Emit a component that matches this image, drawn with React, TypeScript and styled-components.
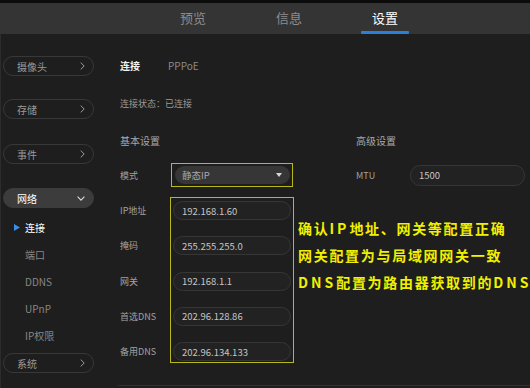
import React from "react";
import styled, { createGlobalStyle } from "styled-components";

const GlobalStyle = createGlobalStyle`
  html, body { margin: 0; padding: 0; background: #1e1e1e; }
  body {
    font-family: "Noto Sans CJK SC", "Noto Sans", "Liberation Sans", sans-serif;
    -webkit-font-smoothing: antialiased;
  }
  * { box-sizing: border-box; }
`;

const Page = styled.div`
  width: 530px;
  height: 388px;
  display: flex;
  flex-direction: column;
  overflow: hidden;
  background: #1e1e1e;
`;

const TopStrip = styled.div`
  flex: none;
  height: 3px;
  background: #0c0c0c;
`;

const Header = styled.nav`
  flex: none;
  height: 31px;
  display: flex;
  padding-left: 145px;
  background: #343434;
`;

const Tab = styled.div<{ $active?: boolean }>`
  position: relative;
  width: 96px;
  display: flex;
  align-items: center;
  justify-content: center;
  padding-bottom: 2px;
  font-size: 13px;
  color: ${(p) => (p.$active ? "#ffffff" : "#8c8c8c")};
  &::after {
    content: "";
    display: ${(p) => (p.$active ? "block" : "none")};
    position: absolute;
    left: 24px;
    bottom: 0;
    width: 48px;
    height: 3px;
    border-radius: 1px;
    background: #2b7fd6;
  }
`;

const Body = styled.div`
  flex: 1;
  display: flex;
  border-left: 1px solid #2c2c2c;
`;

const Sidebar = styled.aside`
  flex: none;
  width: 99px;
  display: flex;
  flex-direction: column;
  padding: 22px 0 0 2px;
`;

const NavPill = styled.div<{ $open?: boolean; $space: number }>`
  width: 91px;
  height: 20px;
  margin-top: ${(p) => p.$space}px;
  display: flex;
  align-items: center;
  justify-content: space-between;
  padding: 0 8px 0 13px;
  border-radius: 10px;
  border: 1px solid ${(p) => (p.$open ? "#3c3c3c" : "#383838")};
  background: ${(p) => (p.$open ? "#3c3c3c" : "transparent")};
  font-size: 10px;
  color: ${(p) => (p.$open ? "#ffffff" : "#9a9a9a")};
`;

const SubList = styled.div`
  display: flex;
  flex-direction: column;
  margin-top: 6px;
`;

const SubItem = styled.div<{ $active?: boolean }>`
  height: 27px;
  display: flex;
  align-items: center;
  padding-left: 11px;
  font-size: 10px;
  color: ${(p) => (p.$active ? "#ffffff" : "#878787")};
`;

const Marker = styled.span`
  width: 11px;
  display: flex;
  align-items: center;
`;

const Main = styled.main`
  flex: 1;
  display: flex;
  flex-direction: column;
  padding: 24px 0 0 20px;
`;

const TitleRow = styled.div`
  height: 14px;
  display: flex;
  align-items: center;
`;

const Title = styled.span`
  width: 48px;
  font-size: 10px;
  font-weight: 700;
  color: #f2f2f2;
`;

const SubTitle = styled.span`
  font-size: 10px;
  color: #8a8a8a;
`;

const Status = styled.div`
  margin-top: 25px;
  height: 14px;
  line-height: 14px;
  font-size: 9px;
  color: #9a9a9a;
`;

const SettingsGrid = styled.div`
  margin-top: 23px;
  display: grid;
  grid-template-columns: 236px 1fr;
  grid-template-rows: 14px 24px;
  row-gap: 15px;
`;

const SectionHeading = styled.div`
  line-height: 14px;
  font-size: 10px;
  color: #a8a8a8;
`;

const FieldRow = styled.div`
  display: flex;
  align-items: center;
`;

const Label = styled.span<{ $width: number }>`
  flex: none;
  width: ${(p) => p.$width}px;
  font-size: 9px;
  color: #a2a2a2;
`;

const SelectBox = styled.div`
  border: 1px solid #b8b81e;
  padding: 2px 2px 2px 3px;
`;

const Select = styled.div`
  width: 115px;
  height: 18px;
  display: flex;
  align-items: center;
  justify-content: space-between;
  padding: 0 8px 0 7px;
  border-radius: 9px;
  background: #363636;
  font-size: 9.5px;
  color: #a8a8a8;
`;

const TextInput = styled.input<{ $width: number; $height: number }>`
  width: ${(p) => p.$width}px;
  height: ${(p) => p.$height}px;
  padding: 0 0 0 8px;
  margin: 0;
  border: 1px solid #363636;
  border-radius: 10px;
  background: #222222;
  font-family: inherit;
  font-size: 9.5px;
  color: #c6c6c6;
  outline: none;
`;

const FieldsRow = styled.div`
  margin-top: 10px;
  display: flex;
  align-items: flex-start;
`;

const LabelStack = styled.div`
  flex: none;
  width: 50px;
  display: flex;
  flex-direction: column;
  gap: 16.25px;
  padding-top: 4px;
`;

const StackLabel = styled.span`
  height: 19px;
  line-height: 19px;
  font-size: 9px;
  color: #a2a2a2;
`;

const FieldBox = styled.div`
  flex: none;
  width: 124px;
  display: flex;
  flex-direction: column;
  gap: 16.25px;
  padding: 3px 1px 1px 2px;
  border: 1px solid #b8b81e;
`;

const Note = styled.div`
  margin-left: 4px;
  padding-top: 18px;
  display: flex;
  flex-direction: column;
  white-space: nowrap;
  font-size: 14px;
  font-weight: 700;
  line-height: 27px;
  letter-spacing: 1.7px;
  color: #f0f000;
`;

const Latin = styled.span`
  letter-spacing: 3px;
`;

const Divider = styled.div`
  margin: 22px 0 0 -2px;
  height: 1px;
  background: #313131;
`;

const ChevronRight = () => (
  <svg width="5" height="8" viewBox="0 0 5 8">
    <polyline points="0.7,0.6 4.2,4 0.7,7.4" fill="none" stroke="#9a9a9a" strokeWidth="1" />
  </svg>
);

const ChevronDown = () => (
  <svg width="8" height="5" viewBox="0 0 8 5">
    <polyline points="0.6,0.7 4,4.2 7.4,0.7" fill="none" stroke="#dcdcdc" strokeWidth="1.1" />
  </svg>
);

const Caret = () => (
  <svg width="6" height="4" viewBox="0 0 6 4">
    <polygon points="0,0 6,0 3,4" fill="#d8d8d8" />
  </svg>
);

const BlueArrow = () => (
  <svg width="6" height="7" viewBox="0 0 6 7">
    <polygon points="0,0 6,3.5 0,7" fill="#3a8ee6" />
  </svg>
);

const fields = [
  { label: "IP地址", value: "192.168.1.60" },
  { label: "掩码", value: "255.255.255.0" },
  { label: "网关", value: "192.168.1.1" },
  { label: "首选DNS", value: "202.96.128.86" },
  { label: "备用DNS", value: "202.96.134.133" },
];

const subItems = ["连接", "端口", "DDNS", "UPnP", "IP权限"];

export default function App() {
  return (
    <>
      <GlobalStyle />
      <Page>
        <TopStrip />
        <Header>
          <Tab>预览</Tab>
          <Tab>信息</Tab>
          <Tab $active>设置</Tab>
        </Header>
        <Body>
          <Sidebar>
            <NavPill $space={0}>
              摄像头
              <ChevronRight />
            </NavPill>
            <NavPill $space={23}>
              存储
              <ChevronRight />
            </NavPill>
            <NavPill $space={25}>
              事件
              <ChevronRight />
            </NavPill>
            <NavPill $space={24} $open>
              网络
              <ChevronDown />
            </NavPill>
            <SubList>
              {subItems.map((s, i) => (
                <SubItem key={s} $active={i === 0}>
                  <Marker>{i === 0 ? <BlueArrow /> : null}</Marker>
                  {s}
                </SubItem>
              ))}
            </SubList>
            <NavPill $space={4}>
              系统
              <ChevronRight />
            </NavPill>
          </Sidebar>
          <Main>
            <TitleRow>
              <Title>连接</Title>
              <SubTitle>PPPoE</SubTitle>
            </TitleRow>
            <Status>连接状态：已连接</Status>
            <SettingsGrid>
              <SectionHeading>基本设置</SectionHeading>
              <SectionHeading>高级设置</SectionHeading>
              <FieldRow>
                <Label $width={51}>模式</Label>
                <SelectBox>
                  <Select>
                    静态IP
                    <Caret />
                  </Select>
                </SelectBox>
              </FieldRow>
              <FieldRow>
                <Label $width={54}>MTU</Label>
                <TextInput $width={115} $height={21} readOnly value="1500" />
              </FieldRow>
            </SettingsGrid>
            <FieldsRow>
              <LabelStack>
                {fields.map((f) => (
                  <StackLabel key={f.label}>{f.label}</StackLabel>
                ))}
              </LabelStack>
              <FieldBox>
                {fields.map((f) => (
                  <TextInput key={f.label} $width={118} $height={19} readOnly value={f.value} />
                ))}
              </FieldBox>
              <Note>
                <span>
                  确认<Latin>IP</Latin>地址、网关等配置正确
                </span>
                <span>网关配置为与局域网网关一致</span>
                <span>
                  <Latin>DNS</Latin>配置为路由器获取到的<Latin>DNS</Latin>
                </span>
              </Note>
            </FieldsRow>
            <Divider />
          </Main>
        </Body>
      </Page>
    </>
  );
}
